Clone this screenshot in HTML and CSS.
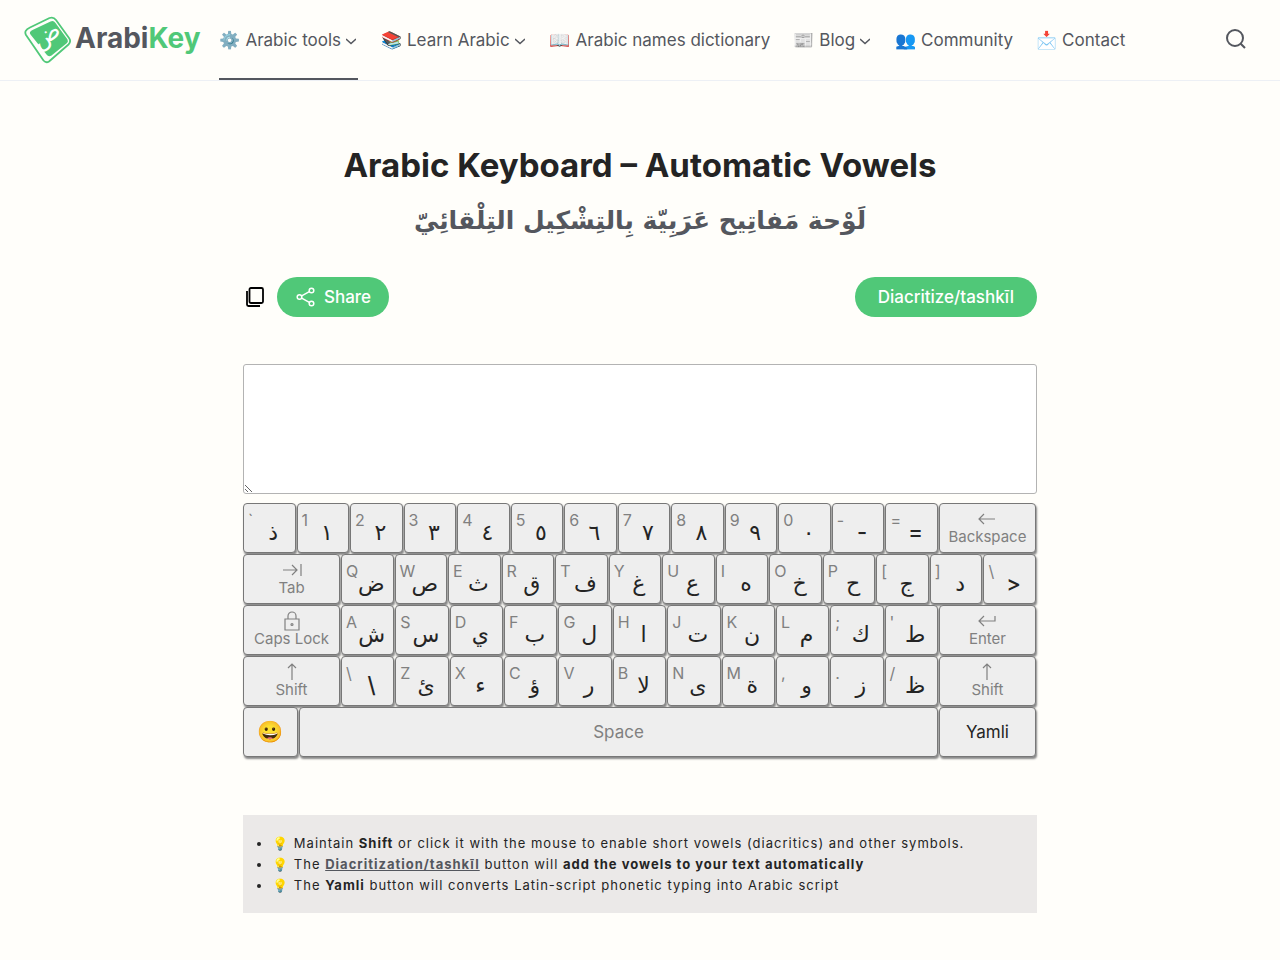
FILE: index.html
```html
<!DOCTYPE html>
<html lang="en">
<head>
    <meta charset="UTF-8">
    <meta name="viewport" content="width=device-width, initial-scale=1.0">
    <title>Arabic Keyboard – Automatic Vowels</title>
    <link rel="stylesheet" href="styles.css">
</head>
<body>

<header>
    <a class="logo" href="#" aria-label="ArabiKey">
        <svg width="48" height="48" viewBox="0 0 48 48">
            <path d="M6 11.500 L25.500 2 Q29.500 .5 32 4 L45 22 Q47.500 25.500 44.500 28.500 L25 45.500 Q22 47.500 19.500 44.500 L2 19 Q-.5 14.500 6 11.500Z" fill="none" stroke="#50c878" stroke-width="1.8" stroke-linejoin="round"/>
            <path d="M8.500 14 L26.500 5.500 Q29.500 4 31.500 7 L43.500 23.500 Q44.500 25.500 43 27 L27.500 39.500 Q24.500 41.500 22.500 38.500 L6.500 18.500 Q4.500 16 8.500 14Z" fill="#50c878" stroke="none"/>
            <text x="25" y="26" class="logo-letter" transform="rotate(-33 25 24)">ض</text>
        </svg>
        <span>Arabi<b>Key</b></span>
    </a>
    <nav>
        <a class="active" href="#">⚙️ Arabic tools <svg class="chevron" viewBox="0 0 10 10"><path d="M0 3l5 4.500 5-4.500"/></svg></a>
        <a href="#">📚 Learn Arabic <svg class="chevron" viewBox="0 0 10 10"><path d="M0 3l5 4.500 5-4.500"/></svg></a>
        <a href="#">📖 Arabic names dictionary</a>
        <a href="#">📰 Blog <svg class="chevron" viewBox="0 0 10 10"><path d="M0 3l5 4.500 5-4.500"/></svg></a>
        <a href="#">👥 Community</a>
        <a href="#">📩 Contact</a>
    </nav>
    <button class="search" aria-label="Search">
        <svg width="20" height="20" viewBox="0 0 20 20"><circle cx="9" cy="9" r="8"/><path d="M14.700 14.700L19 19"/></svg>
    </button>
</header>

<main class="container">
    <h1>Arabic Keyboard – Automatic Vowels</h1>
    <h2 dir="rtl" lang="ar">لَوْحة مَفاتِيح عَرَبِيّة بِالتِشْكِيل التِلْقائِيّ</h2>

    <div class="toolbar">
        <button class="copy" aria-label="Copy">
            <svg width="18" height="20" viewBox="0 0 18 20"><path d="M5 1h10.500q1.500 0 1.500 1.500v12q0 1.500-1.500 1.500h-10.500q-1.500 0-1.500-1.500v-12q0-1.500 1.500-1.500zM1 4v13.500q0 1.500 1.500 1.500h11.500"/></svg>
        </button>
        <button class="pill share">
            <svg width="20" height="20" viewBox="0 0 20 20"><circle cx="3.500" cy="10" r="2.300"/><circle cx="15.500" cy="3.500" r="2.300"/><circle cx="15.500" cy="16.500" r="2.300"/><path d="M5.700 8.800l7.600-4.100M5.700 11.200l7.600 4.100"/></svg>
            Share
        </button>
        <button class="pill diacritize">Diacritize/tashkīl</button>
    </div>

    <textarea dir="rtl" lang="ar" aria-label="Arabic text"></textarea>

    <div class="keyboard">
        <div class="row">
            <button class="key"><small>`</small><span>ذ</span></button>
            <button class="key"><small>1</small><span>١</span></button>
            <button class="key"><small>2</small><span>٢</span></button>
            <button class="key"><small>3</small><span>٣</span></button>
            <button class="key"><small>4</small><span>٤</span></button>
            <button class="key"><small>5</small><span>٥</span></button>
            <button class="key"><small>6</small><span>٦</span></button>
            <button class="key"><small>7</small><span>٧</span></button>
            <button class="key"><small>8</small><span>٨</span></button>
            <button class="key"><small>9</small><span>٩</span></button>
            <button class="key"><small>0</small><span>٠</span></button>
            <button class="key"><small>-</small><span>-</span></button>
            <button class="key"><small>=</small><span>=</span></button>
            <button class="key wide"><svg viewBox="0 0 20 20"><path d="M18 10H2M7 5l-5 5 5 5"/></svg>Backspace</button>
        </div>
        <div class="row">
            <button class="key wide"><svg viewBox="0 0 20 20"><path d="M1 10h14M10 5l5 5-5 5M19 4v12"/></svg>Tab</button>
            <button class="key"><small>Q</small><span>ض</span></button>
            <button class="key"><small>W</small><span>ص</span></button>
            <button class="key"><small>E</small><span>ث</span></button>
            <button class="key"><small>R</small><span>ق</span></button>
            <button class="key"><small>T</small><span>ف</span></button>
            <button class="key"><small>Y</small><span>غ</span></button>
            <button class="key"><small>U</small><span>ع</span></button>
            <button class="key"><small>I</small><span>ه</span></button>
            <button class="key"><small>O</small><span>خ</span></button>
            <button class="key"><small>P</small><span>ح</span></button>
            <button class="key"><small>[</small><span>ج</span></button>
            <button class="key"><small>]</small><span>د</span></button>
            <button class="key"><small>\</small><span>&gt;</span></button>
        </div>
        <div class="row">
            <button class="key wide"><svg viewBox="0 0 20 20"><path d="M3 8h14v11H3zM6 8V5a4 4 0 0 1 8 0v3"/><circle cx="10" cy="13.500" r="1"/></svg>Caps Lock</button>
            <button class="key"><small>A</small><span>ش</span></button>
            <button class="key"><small>S</small><span>س</span></button>
            <button class="key"><small>D</small><span>ي</span></button>
            <button class="key"><small>F</small><span>ب</span></button>
            <button class="key"><small>G</small><span>ل</span></button>
            <button class="key"><small>H</small><span>ا</span></button>
            <button class="key"><small>J</small><span>ت</span></button>
            <button class="key"><small>K</small><span>ن</span></button>
            <button class="key"><small>L</small><span>م</span></button>
            <button class="key"><small>;</small><span>ك</span></button>
            <button class="key"><small>'</small><span>ط</span></button>
            <button class="key wide"><svg viewBox="0 0 20 20"><path d="M18 5v5H2M7 5l-5 5 5 5"/></svg>Enter</button>
        </div>
        <div class="row">
            <button class="key wide"><svg viewBox="0 0 20 20"><path d="M10 18V2M6 6l4-4 4 4"/></svg>Shift</button>
            <button class="key"><small>\</small><span>\</span></button>
            <button class="key"><small>Z</small><span>ئ</span></button>
            <button class="key"><small>X</small><span>ء</span></button>
            <button class="key"><small>C</small><span>ؤ</span></button>
            <button class="key"><small>V</small><span>ر</span></button>
            <button class="key"><small>B</small><span>لا</span></button>
            <button class="key"><small>N</small><span>ى</span></button>
            <button class="key"><small>M</small><span>ة</span></button>
            <button class="key"><small>,</small><span>و</span></button>
            <button class="key"><small>.</small><span>ز</span></button>
            <button class="key"><small>/</small><span>ظ</span></button>
            <button class="key wide"><svg viewBox="0 0 20 20"><path d="M10 18V2M6 6l4-4 4 4"/></svg>Shift</button>
        </div>
        <div class="row">
            <button class="key emoji">😀</button>
            <button class="key space">Space</button>
            <button class="key wide yamli">Yamli</button>
        </div>
    </div>

    <ul class="notes">
        <li>💡 Maintain <strong>Shift</strong> or click it with the mouse to enable short vowels (diacritics) and other symbols.</li>
        <li>💡 The <a href="#">Diacritization/tashkīl</a> button will <strong>add the vowels to your text automatically</strong></li>
        <li>💡 The <strong>Yamli</strong> button will converts Latin-script phonetic typing into Arabic script</li>
    </ul>
</main>

</body>
</html>
```
FILE: styles.css
```css
* {
    box-sizing: border-box;
}
body {
    margin: 0;
    background-color: #fffefa;
    color: #242424;
    font-family: Inter, "DejaVu Sans", "Noto Color Emoji", sans-serif;
    font-size: 17px;
}
button {
    font-family: inherit;
    cursor: pointer;
}
svg {
    fill: none;
    stroke: currentColor;
}
header {
    display: flex;
    align-items: center;
    height: 81px;
    padding: 0 34px 0 24px;
    border-bottom: 1px solid #edf0f5;
    color: #54575e;
}
.logo {
    display: flex;
    align-items: center;
    gap: 3px;
    margin-right: 19px;
    color: #54575e;
    font-size: 28px;
    font-weight: 700;
    line-height: 32px;
    text-decoration: none;
}
.logo span {
    padding-bottom: 4px;
}
.logo b {
    color: #50c878;
    font-weight: 700;
}
.logo-letter {
    fill: #fff;
    stroke: none;
    font-family: "DejaVu Sans", sans-serif;
    font-size: 24px;
    font-weight: 400;
    text-anchor: middle;
}
nav {
    display: flex;
    gap: 23px;
    height: 80px;
}
nav a {
    display: flex;
    align-items: center;
    border-bottom: 2px solid transparent;
    border-top: 2px solid transparent;
    color: #54575e;
    text-decoration: none;
    white-space: nowrap;
}
nav a.active {
    border-bottom-color: #54575e;
}
.chevron {
    width: 10px;
    height: 10px;
    margin: 2px 2px 0 5px;
    stroke-width: 1.5;
}
.search {
    display: flex;
    margin-left: auto;
    padding: 0 0 3px;
    border: none;
    background: none;
    color: #54575e;
}
.search svg {
    stroke-width: 2;
}
.container {
    width: 62%;
    min-width: 794px;
    margin: 0 auto;
    padding-top: 60px;
}
h1 {
    margin: 0;
    font-size: 33px;
    line-height: 48px;
    text-align: center;
}
h2 {
    margin: 8px 0 32px;
    color: #54575e;
    font-family: "DejaVu Sans", sans-serif;
    font-size: 25px;
    line-height: 48px;
    text-align: center;
}
.toolbar {
    display: flex;
    align-items: center;
    margin-bottom: 47px;
}
.copy {
    display: flex;
    margin-right: 13px;
    padding: 0 0 0 3px;
    border: none;
    background: none;
    color: #000;
}
.copy svg {
    stroke-width: 1.8;
}
.pill {
    display: flex;
    align-items: center;
    height: 40px;
    padding: 0 20px;
    border: none;
    border-radius: 20px;
    background-color: #50c878;
    color: #fff;
    font-size: 17px;
    font-weight: 500;
}
.share {
    gap: 8px;
    padding: 0 18px 0 19px;
}
.share svg {
    stroke-width: 1.5;
}
.diacritize {
    margin-left: auto;
    padding: 0 23px;
}
textarea {
    display: block;
    width: 100%;
    height: 130px;
    padding: 8px;
    border: 1px solid #b3b3b3;
    border-radius: 3px;
    background-color: #fff;
    font-size: 24px;
    resize: vertical;
}
.keyboard {
    display: flex;
    flex-direction: column;
    gap: 1px;
    margin-top: 9px;
    padding-right: 1px;
}
.row {
    display: flex;
    gap: 1px;
}
.key {
    display: grid;
    flex: 1 1 0;
    min-width: 0;
    height: 50px;
    padding: 0;
    border: 1px solid #777;
    border-radius: 4px;
    background-color: #eee;
    box-shadow: 1px 2px 2px #888;
    color: #242424;
    font-size: 22px;
}
.key small {
    grid-area: 1 / 1;
    place-self: start;
    padding: 6px 0 0 4px;
    color: #808080;
    font-size: 16px;
    line-height: 20px;
}
.key span {
    grid-area: 1 / 1;
    place-self: end center;
    padding-left: 8px;
    font-weight: 500;
    line-height: 40px;
}
.key.wide {
    display: flex;
    flex: 0 0 97px;
    flex-direction: column;
    align-items: center;
    justify-content: center;
    padding-bottom: 4px;
    color: #808080;
    font-size: 15px;
    line-height: 15px;
}
.wide svg {
    width: 20px;
    height: 20px;
    stroke-width: 1.2;
}
.key.emoji {
    flex: 0 0 55px;
    place-items: center;
    font-family: "Noto Color Emoji", sans-serif;
    font-size: 21px;
}
.key.space {
    place-items: center;
    color: #808080;
    font-size: 17px;
}
.key.yamli {
    padding-bottom: 0;
    color: #242424;
    font-size: 17px;
}
.notes {
    margin: 58px 0 47px;
    padding: 18px 16px 17px 29px;
    background-color: #ebe9e8;
    font-size: 13px;
    letter-spacing: 1px;
    line-height: 21px;
}
.notes a {
    color: #54575e;
    font-weight: 700;
}
```
